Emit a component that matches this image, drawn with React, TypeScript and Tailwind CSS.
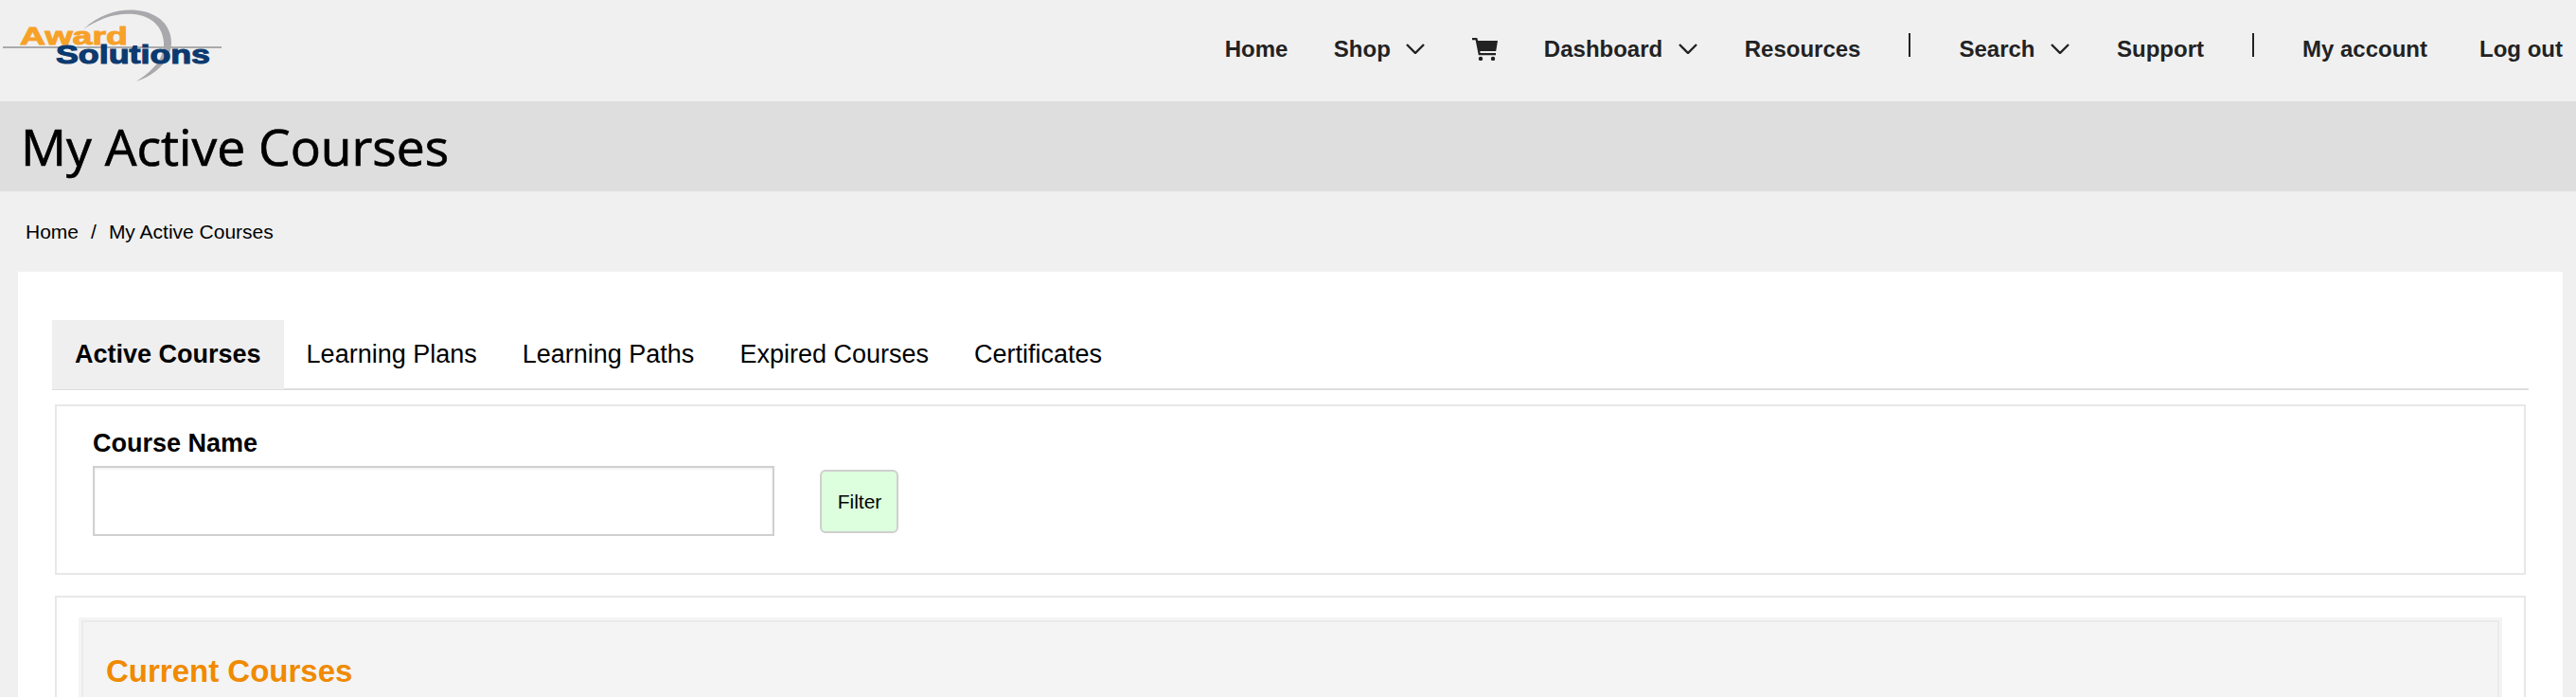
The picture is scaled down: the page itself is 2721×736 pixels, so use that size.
const Chevron = () => (
  <svg width="20" height="11" viewBox="0 0 20 11" fill="none" stroke="#222" strokeWidth="2.4" className="mr-[1.5px]">
    <polyline points="1,1 10,10 19,1" />
  </svg>
);

const Cart = () => (
  <svg width="27" height="24" viewBox="0 0 27 24" fill="#222">
    <path d="M0 0h5.2l1 3H27l-1.8 11H8.2l.5 2H25v2.2H6.8L3.6 2.2H0z" />
    <circle cx="9" cy="22" r="2.2" />
    <circle cx="22" cy="22" r="2.2" />
  </svg>
);

const Logo = () => (
  <svg width="240" height="90" viewBox="0 0 240 90" className="shrink-0">
    <path
      d="M88 31C106 14 128 9 145 11C167 13 181 27 181 45C181 63 165 79 144 86C160 76 174 62 173 45C172 28 160 17 142 15C122 13 104 20 88 31Z"
      fill="#a9a9ad"
    />
    <rect x="3" y="49" width="231" height="2" fill="#aaaaaa" />
    <text x="21" y="46.5" fontFamily="Liberation Sans" fontWeight="700" fontSize="26" fill="#f7a128" textLength="114" lengthAdjust="spacingAndGlyphs" stroke="#f7a128" strokeWidth="0.9">
      Award
    </text>
    <text x="59" y="66.5" fontFamily="Liberation Sans" fontWeight="700" fontSize="28" fill="#0b3a6f" textLength="163" lengthAdjust="spacingAndGlyphs" stroke="#0b3a6f" strokeWidth="1.1">
      Solutions
    </text>
  </svg>
);

const Separator = () => <span className="mx-[2.5px] h-[25px] w-[2px] bg-[#222] -translate-y-[4px]" />;

const Header = () => (
  <header className="flex h-[107px] items-start bg-[#f0f0f0] pr-[14px]">
    <Logo />
    <nav className="ml-auto flex h-[103px] items-center gap-[48.5px] text-[24px] font-bold text-[#222]">
      <a>Home</a>
      <a className="flex items-center gap-[16.5px]">
        Shop <Chevron />
      </a>
      <Cart />
      <a className="flex items-center gap-[16.5px]">
        Dashboard <Chevron />
      </a>
      <a>Resources</a>
      <Separator />
      <a className="flex items-center gap-[16.5px]">
        Search <Chevron />
      </a>
      <a>Support</a>
      <Separator />
      <a>My account</a>
      <a className="ml-[6.5px]">Log out</a>
    </nav>
  </header>
);

const tabs = ["Learning Plans", "Learning Paths", "Expired Courses", "Certificates"];

export default function App() {
  return (
    <div className="h-[736px] overflow-hidden bg-[#f0f0f0] font-['Liberation_Sans',Arial,sans-serif] text-black">
      <Header />
      <div className="flex h-[95px] items-center bg-[#dedede] pl-[22px]">
        <h1 className="font-['Open_Sans',sans-serif] text-[53.4px] leading-none [-webkit-text-stroke:0.7px_black]">
          My Active Courses
        </h1>
      </div>
      <div className="flex h-[85px] items-center gap-[13px] pl-[27px] text-[21px]">
        <a>Home</a>
        <span>/</span>
        <a>My Active Courses</a>
      </div>

      <main className="ml-[19px] mr-[14px] h-[600px] bg-white pl-[36px] pr-[36px] pt-[51px]">
        <div className="flex h-[74px] border-b-2 border-[#dedede] text-[27px]">
          <a className="flex h-[73px] items-center bg-[#efefef] px-[24px] font-bold">Active Courses</a>
          {tabs.map((tab) => (
            <a key={tab} className="flex h-[73px] items-center px-[24px]">
              {tab}
            </a>
          ))}
        </div>

        <div className="mx-[3px] mt-[15px] flex h-[180px] items-start gap-[48px] border-2 border-[#e8e8e8] pl-[38px] pt-[21px]">
          <div>
            <label className="block text-[27px] font-bold leading-[36px]">Course Name</label>
            <input
              type="text"
              className="mt-[6px] block h-[74px] w-[720px] border-2 border-[#d0d0d0] shadow-[inset_0_1px_3px_rgba(0,0,0,0.08)]"
            />
          </div>
          <button className="mt-[46px] h-[67px] w-[83px] rounded-[6px] border-2 border-[#cfcfcf] bg-[#ddffdd] pl-[1px] text-[21px]">
            Filter
          </button>
        </div>

        <div className="mx-[3px] mt-[22px] h-[300px] border-2 border-[#e8e8e8] pl-[26px] pr-[26px] pt-[24px]">
          <div className="h-[200px] border-2 border-[#ebebeb] bg-[#f4f4f4] pl-[24px] pt-[32px] shadow-[0_0_0_3px_#f4f4f4]">
            <h2 className="text-[33px] font-bold leading-[40px] text-[#f08a00]">Current Courses</h2>
          </div>
        </div>
      </main>
    </div>
  );
}
